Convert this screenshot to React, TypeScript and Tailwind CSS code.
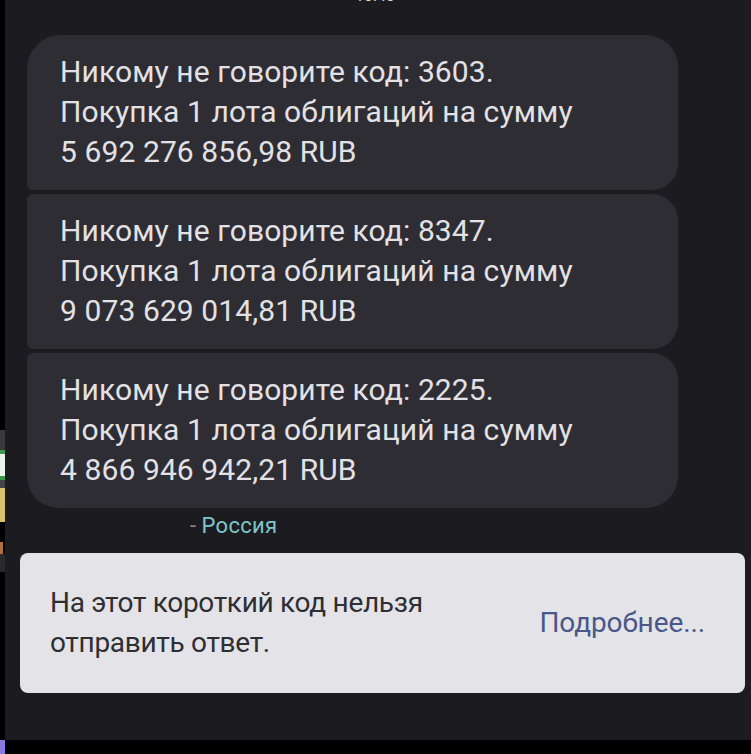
import React from "react";

const messages = [
  { code: "3603", sum: "5 692 276 856,98 RUB", shape: "rounded-tl-[34px] rounded-tr-[32px] rounded-br-[26px] rounded-bl-[6px]" },
  { code: "8347", sum: "9 073 629 014,81 RUB", shape: "rounded-tl-[6px] rounded-tr-[26px] rounded-br-[26px] rounded-bl-[6px]" },
  { code: "2225", sum: "4 866 946 942,21 RUB", shape: "rounded-tl-[6px] rounded-tr-[26px] rounded-br-[32px] rounded-bl-[32px]" },
];

const Bubble = ({ code, sum, shape }: { code: string; sum: string; shape: string }) => {
  return (
    <div className={`w-[651px] h-[155px] bg-[#2e2d33] px-[33px] pt-[17px] ${shape}`}>
      <p className="text-[30px] leading-[40px] text-[#e2e1e6] tracking-[0.1px]">
        Никому не говорите код: {code}.
        <br />
        Покупка 1 лота облигаций на сумму
        <br />
        {sum}
      </p>
    </div>
  );
};

export default function App() {
  return (
    <div className="w-[751px] h-[754px] bg-[#1c1b20] flex flex-col overflow-hidden font-['Roboto','Noto_Sans',sans-serif]">
      <div className="flex flex-1">
        {/* edge of the other screen */}
        <div className="w-[5px] bg-black flex flex-col shrink-0">
          <div className="h-[430px]" />
          <div className="h-[20px] bg-[#3a3a3a]" />
          <div className="h-[30px] bg-[#e8f5e8] border-y-[4px] border-[#3b9a4e]" />
          <div className="h-[8px] bg-[#444]" />
          <div className="h-[34px] bg-[#d8c46a]" />
          <div className="h-[20px]" />
          <div className="h-[12px] bg-[#b0703a] w-[3px]" />
          <div className="h-[18px] bg-[#2a2a2a]" />
        </div>

        <div className="flex-1 flex flex-col">
          <div className="h-[35px] overflow-hidden flex justify-center pr-[6px]">
            <span className="-mt-[14px] text-[16px] leading-[20px] text-[#d8d8dc]">13:43</span>
          </div>

          <div className="ml-[22px] flex flex-col gap-[4px]">
            {messages.map((m) => (
              <Bubble key={m.code} {...m} />
            ))}
          </div>

          <div className="h-[45px] pl-[185px] pt-[5px]">
            <span className="text-[22px] leading-[26px] text-[#8a8a90]">- </span>
            <span className="text-[22px] leading-[26px] text-[#7cc6cb] tracking-[0.3px]">Россия</span>
          </div>

          <div className="ml-[15px] w-[725px] h-[140px] bg-[#e3e3e8] rounded-[8px] flex items-center justify-between pl-[30px] pr-[40px]">
            <p className="text-[28px] leading-[40px] text-[#2e2e33] tracking-[-0.3px]">
              На этот короткий код нельзя
              <br />
              отправить ответ.
            </p>
            <span className="text-[28px] leading-[30px] text-[#4a5789] tracking-[-0.1px]">Подробнее...</span>
          </div>
        </div>
      </div>
      <div className="h-[14px] bg-black flex shrink-0">
        <div className="w-[5px] bg-[#8a7ae0]" />
      </div>
    </div>
  );
}
